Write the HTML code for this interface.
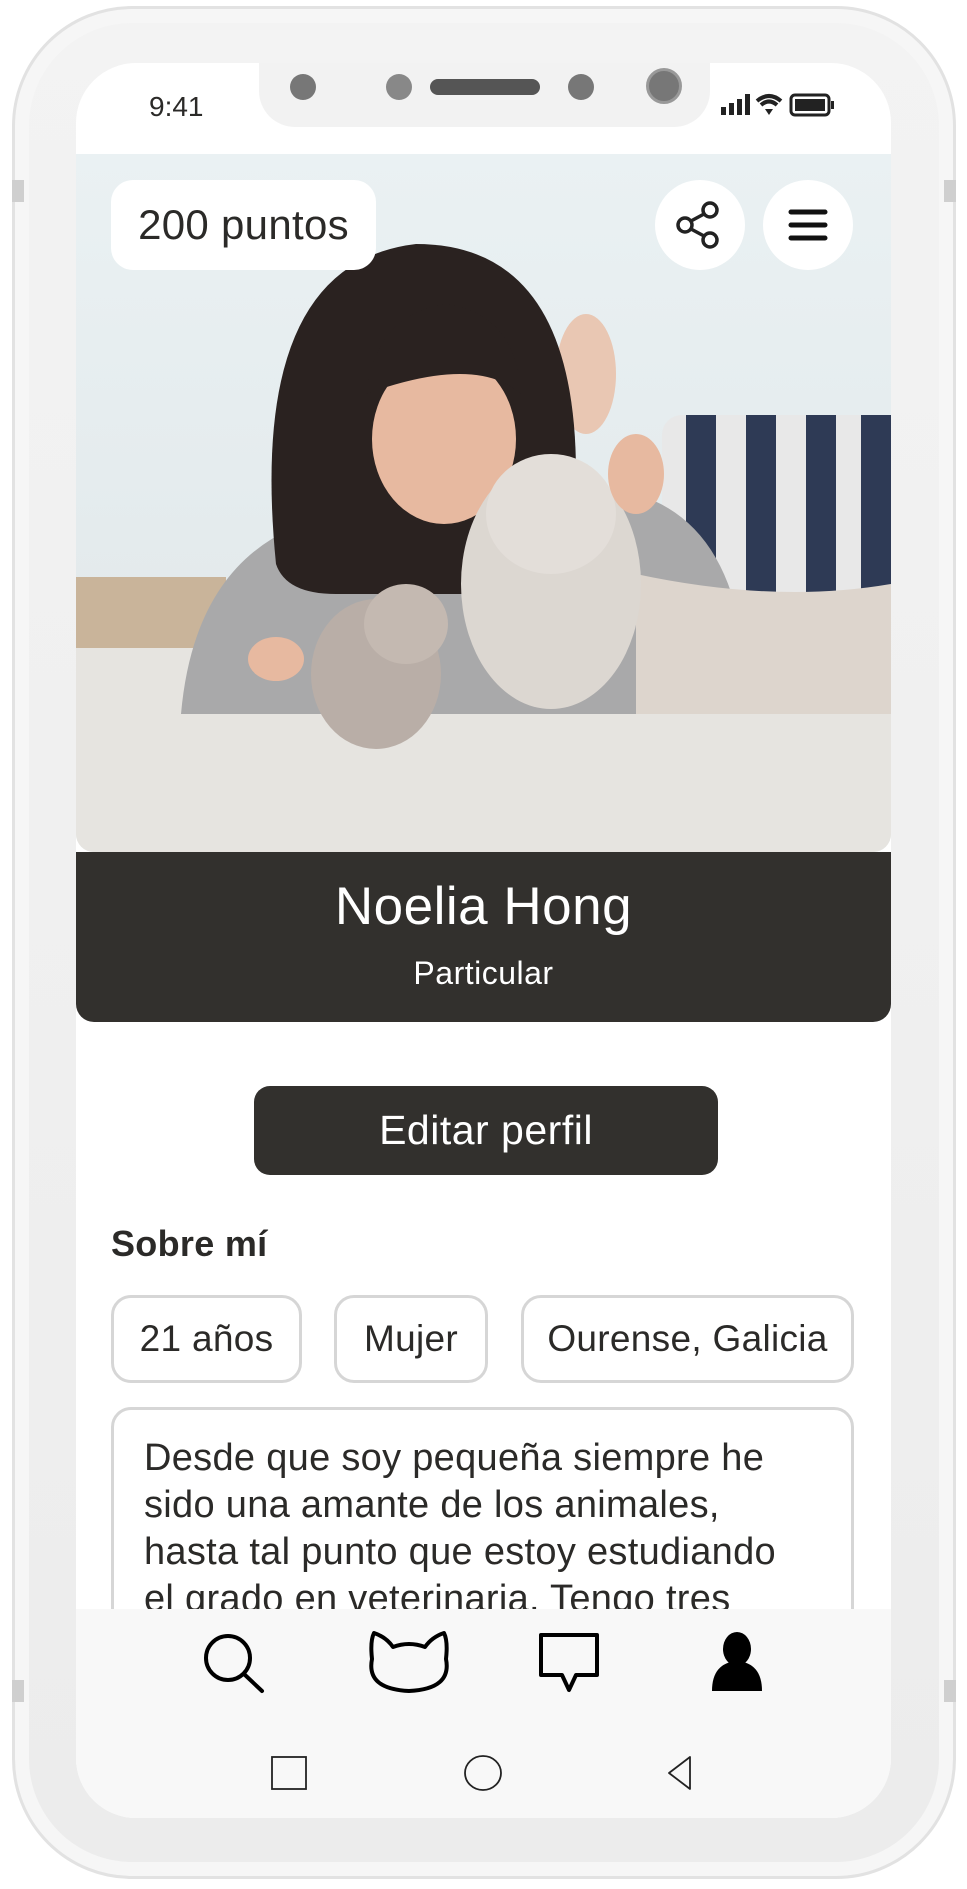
<!DOCTYPE html>
<html><head><meta charset="utf-8">
<style>
*{margin:0;padding:0;box-sizing:border-box}
html,body{width:967px;height:1889px;background:#fff;overflow:hidden;font-family:"Liberation Sans",sans-serif;color:#2b2a28}
.phone{position:absolute;left:12px;top:6px;width:944px;height:1873px;border-radius:120px;background:linear-gradient(#f3f3f3,#ececec);border:3px solid #e2e2e2;box-shadow:inset 0 0 0 14px #f6f6f6}
.side{position:absolute;background:#cfcfcf;width:8px}
.screen{position:absolute;left:76px;top:63px;width:815px;height:1755px;border-radius:60px;background:#fff;overflow:hidden}
.notch{position:absolute;left:183px;top:0;width:451px;height:64px;background:#f2f2f2;border-radius:0 0 36px 36px}
.abs{position:absolute}
.photo{position:absolute;left:0;top:91px;width:815px;height:698px;border-radius:0 0 18px 18px;overflow:hidden}
.panel{position:absolute;left:0;top:789px;width:815px;height:170px;background:#32302d;border-radius:0 0 18px 18px;color:#fff;text-align:center}
.chip{position:absolute;top:1232px;height:88px;border:3px solid #d6d6d6;border-radius:20px;font-size:37px;line-height:82px;text-align:center;letter-spacing:0.3px;white-space:nowrap}
.nav{position:absolute;left:0;top:1546px;width:815px;height:209px;background:#f8f8f8}
</style></head><body>
<div class="phone"></div>
<div class="side" style="left:12px;top:180px;height:22px;width:12px"></div>
<div class="side" style="left:944px;top:180px;height:22px;width:12px"></div>
<div class="side" style="left:12px;top:1680px;height:22px;width:12px"></div>
<div class="side" style="left:944px;top:1680px;height:22px;width:12px"></div>
<div class="screen">
  <div class="notch"></div>
  <div class="abs" style="border-radius:50%;background:#777;left:214px;top:11px;width:26px;height:26px"></div>
  <div class="abs" style="left:310px;top:11px;width:26px;height:26px;border-radius:50%;background:#888"></div>
  <div class="abs" style="left:354px;top:16px;width:110px;height:16px;border-radius:8px;background:#555"></div>
  <div class="abs" style="left:492px;top:11px;width:26px;height:26px;border-radius:50%;background:#777"></div>
  <div class="abs" style="left:570px;top:5px;width:36px;height:36px;border-radius:50%;background:#777;border:3px solid #999"></div>
  <div class="abs" style="left:73px;top:28px;font-size:28px">9:41</div>
  <svg class="abs" style="left:645px;top:28px" width="140" height="30" viewBox="0 0 140 30">
    <rect x="0" y="16" width="5" height="8" fill="#222"/><rect x="8" y="12" width="5" height="12" fill="#222"/><rect x="16" y="8" width="5" height="16" fill="#222"/><rect x="24" y="3" width="5" height="21" fill="#222"/>
    <path d="M36 10 Q48 0 60 10 M40 14 Q48 7 56 14" stroke="#222" stroke-width="4" fill="none"/><path d="M44 18 L48 24 L52 18 Z" fill="#222"/>
    <rect x="70" y="4" width="38" height="20" rx="4" fill="none" stroke="#222" stroke-width="3"/><rect x="74" y="8" width="30" height="12" fill="#222"/><rect x="110" y="10" width="3" height="8" fill="#222"/>
  </svg>
  <div class="photo">
    <svg width="815" height="698" viewBox="0 0 815 698">
      <defs><linearGradient id="bg" x1="0" y1="0" x2="0" y2="1"><stop offset="0" stop-color="#eaf1f3"/><stop offset="1" stop-color="#dfe6e8"/></linearGradient></defs>
      <rect width="815" height="698" fill="url(#bg)"/>
      <rect x="0" y="423" width="150" height="90" fill="#c9b49a"/>
      <ellipse cx="510" cy="220" rx="30" ry="60" fill="#e9c7b3"/>
      <rect x="586" y="261" width="229" height="180" rx="20" fill="#e8e8e8"/>
      <rect x="610" y="261" width="30" height="180" fill="#2e3a55"/><rect x="670" y="261" width="30" height="180" fill="#2e3a55"/><rect x="730" y="261" width="30" height="180" fill="#2e3a55"/><rect x="785" y="261" width="30" height="180" fill="#2e3a55"/>
      <rect x="0" y="494" width="815" height="204" fill="#e6e4e0"/>
      <path d="M105 560 Q120 390 260 360 L560 340 Q660 370 670 520 L700 560 Z" fill="#a9a9aa"/>
      <path d="M560 420 Q700 450 815 430 L815 560 L560 560 Z" fill="#ddd5cd"/>
      <path d="M200 410 Q170 110 340 90 Q500 90 500 320 Q500 420 450 440 L260 440 Q210 440 200 410Z" fill="#2a2220"/>
      <ellipse cx="368" cy="285" rx="72" ry="85" fill="#e7b9a0"/>
      <path d="M290 240 Q300 160 370 150 Q440 160 445 240 Q400 200 290 240Z" fill="#2a2220"/>
      <ellipse cx="475" cy="430" rx="90" ry="125" fill="#dcd7d1"/>
      <ellipse cx="475" cy="360" rx="65" ry="60" fill="#e3ded9"/>
      <ellipse cx="300" cy="520" rx="65" ry="75" fill="#b9aea7"/>
      <ellipse cx="330" cy="470" rx="42" ry="40" fill="#c4b9b1"/>
      <ellipse cx="200" cy="505" rx="28" ry="22" fill="#e7b9a0"/>
      <ellipse cx="560" cy="320" rx="28" ry="40" fill="#e7b9a0"/>
    </svg>
    <div class="abs" style="left:35px;top:26px;width:265px;height:90px;background:#fff;border-radius:22px;font-size:42px;line-height:90px;text-align:center;letter-spacing:0.3px;white-space:nowrap">200 puntos</div>
    <div class="abs" style="left:579px;top:26px;width:90px;height:90px;background:#fff;border-radius:50%"></div>
    <svg class="abs" style="left:579px;top:26px" width="90" height="90" viewBox="0 0 90 90"><g fill="none" stroke="#222" stroke-width="3.5"><circle cx="55" cy="30" r="7"/><circle cx="30" cy="45" r="7"/><circle cx="55" cy="60" r="7"/><path d="M36 41 L49 34 M36 49 L49 56"/></g></svg>
    <div class="abs" style="left:687px;top:26px;width:90px;height:90px;background:#fff;border-radius:50%"></div>
    <svg class="abs" style="left:687px;top:26px" width="90" height="90" viewBox="0 0 90 90"><g stroke="#111" stroke-width="5" stroke-linecap="round"><path d="M28 32H62M28 45H62M28 58H62"/></g></svg>
  </div>
  <div class="panel">
    <div style="position:absolute;top:24px;width:100%;font-size:53px;letter-spacing:0.5px">Noelia Hong</div>
    <div style="position:absolute;top:103px;width:100%;font-size:32px;letter-spacing:0.5px">Particular</div>
  </div>
  <div class="abs" style="left:178px;top:1023px;width:464px;height:89px;background:#32302d;border-radius:16px;color:#fff;font-size:41px;line-height:89px;text-align:center;letter-spacing:0.5px">Editar perfil</div>
  <div class="abs" style="left:35px;top:1160px;font-size:36px;font-weight:bold;letter-spacing:0.3px">Sobre mí</div>
  <div class="chip" style="left:35px;width:191px">21 años</div>
  <div class="chip" style="left:258px;width:154px">Mujer</div>
  <div class="chip" style="left:445px;width:333px">Ourense, Galicia</div>
  <div class="abs" style="left:35px;top:1344px;width:743px;height:300px;border:3px solid #d6d6d6;border-radius:20px"></div>
  <div class="abs" style="left:68px;top:1372px;font-size:38px;line-height:47px;letter-spacing:0.3px;width:740px;white-space:nowrap">Desde que soy pequeña siempre he<br>sido una amante de los animales,<br>hasta tal punto que estoy estudiando<br>el grado en veterinaria. Tengo tres</div>
  <div class="nav">
    <svg width="815" height="209" viewBox="0 0 815 209">
      <g fill="none" stroke="#000" stroke-width="4" stroke-linecap="round" stroke-linejoin="round">
        <circle cx="152" cy="49" r="22"/><path d="M168 65 L186 82"/>
        <path d="M296 50 Q294 32 298 24 Q310 28 317 38 Q325 35 333 35 Q341 35 349 38 Q356 28 368 24 Q372 32 370 50 Q376 80 333 82 Q290 80 296 50Z"/>
        <path d="M465 26 H521 V66 H500 L493 81 L486 66 H465 Z"/>
      </g>
      <ellipse cx="661" cy="40" rx="14" ry="17" fill="#000"/>
      <path d="M636 82 Q636 54 661 52 Q686 54 686 82Z" fill="#000"/>
    </svg>
  </div>
  <svg class="abs" style="left:0;top:1690px" width="815" height="70" viewBox="0 0 815 70"><g fill="none" stroke="#222" stroke-width="1.8">
    <rect x="196" y="4" width="34" height="32"/>
    <ellipse cx="407" cy="20" rx="18" ry="17"/>
    <path d="M614 4 L614 36 L593 20 Z" stroke-linejoin="round"/>
  </g></svg>
</div>
</body></html>
